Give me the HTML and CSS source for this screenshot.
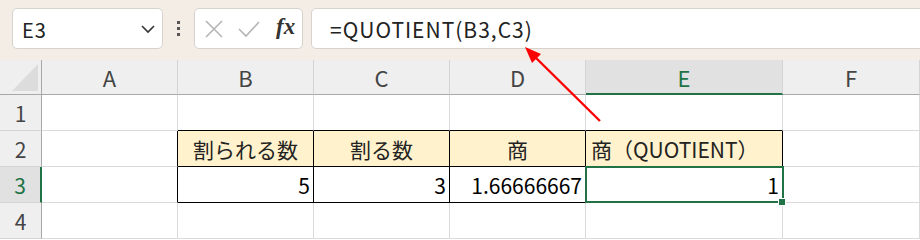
FILE: index.html
```html
<!DOCTYPE html>
<html lang="ja">
<head>
    <meta charset="UTF-8">
    <title>QUOTIENT</title>
    <link rel="stylesheet" href="styles.css">
</head>
<body>
<div class="sheet">
    <!-- 数式バー -->
    <div class="topbar">
        <div class="namebox">
            <span>E3</span>
            <svg class="chevron" width="16" height="10" viewBox="0 0 16 10">
                <path d="M2 2 L8 8 L14 2" fill="none" stroke="#333" stroke-width="1.6"/>
            </svg>
        </div>
        <div class="dots"><i></i><i></i><i></i></div>
        <div class="fxbox">
            <svg width="20" height="20" viewBox="0 0 20 20">
                <path d="M2 2 L18 18 M18 2 L2 18" stroke="#b4b4b4" stroke-width="1.6" fill="none"/>
            </svg>
            <svg width="24" height="20" viewBox="0 0 24 20">
                <path d="M2 10 L9 17 L22 3" stroke="#b4b4b4" stroke-width="1.6" fill="none"/>
            </svg>
            <span class="fx">fx</span>
        </div>
        <div class="formula">=QUOTIENT(B3,C3)</div>
    </div>

    <!-- グリッド -->
    <div class="grid">
        <div class="corner"><div class="tri"></div></div>
        <div class="colhead">A</div>
        <div class="colhead">B</div>
        <div class="colhead">C</div>
        <div class="colhead">D</div>
        <div class="colhead active">E</div>
        <div class="colhead">F</div>

        <div class="rowhead">1</div>
        <div class="cell"></div>
        <div class="cell tt"></div>
        <div class="cell tt"></div>
        <div class="cell tt"></div>
        <div class="cell tt"></div>
        <div class="cell"></div>

        <div class="rowhead">2</div>
        <div class="cell tl"></div>
        <div class="cell t head">割られる数</div>
        <div class="cell t head">割る数</div>
        <div class="cell t head">商</div>
        <div class="cell t head left">商（QUOTIENT）</div>
        <div class="cell"></div>

        <div class="rowhead active">3</div>
        <div class="cell tl"></div>
        <div class="cell t num">5</div>
        <div class="cell t num">3</div>
        <div class="cell t num">1.66666667</div>
        <div class="cell t num selected">1</div>
        <div class="cell"></div>

        <div class="rowhead">4</div>
        <div class="cell"></div>
        <div class="cell"></div>
        <div class="cell"></div>
        <div class="cell"></div>
        <div class="cell"></div>
        <div class="cell"></div>
    </div>

    <!-- 矢印 -->
    <svg class="arrow" width="920" height="240" viewBox="0 0 920 240">
        <line x1="600" y1="121" x2="532" y2="54" stroke="#ff0000" stroke-width="2.4"/>
        <polygon points="525,47 541,54 532,63" fill="#ff0000"/>
    </svg>
</div>
</body>
</html>
```

FILE: styles.css
```css
* {
    margin: 0;
    padding: 0;
    box-sizing: border-box;
}

body {
    width: 920px;
    height: 240px;
    overflow: hidden;
    background: #fff;
    font-family: "Noto Sans CJK JP", "Noto Sans", sans-serif;
    color: #000;
}

.sheet {
    position: relative;
    width: 920px;
}

.topbar {
    height: 60px;
    background: #f3ede6;
    display: flex;
    align-items: center;
    padding: 0 0 3px 12px;
}

.namebox {
    width: 151px;
    height: 41px;
    background: #fff;
    border: 1px solid #d6d2ce;
    border-radius: 5px;
    display: flex;
    align-items: center;
    justify-content: space-between;
    padding: 0 6px 0 9px;
    font-size: 20px;
    color: #222;
    letter-spacing: 1px;
}

.namebox span {
    padding-top: 2px;
}

.dots {
    width: 31px;
    display: flex;
    flex-direction: column;
    align-items: center;
    gap: 3px;
}

.dots i {
    width: 3px;
    height: 3px;
    background: #555;
}

.fxbox {
    width: 109px;
    height: 41px;
    background: #fff;
    border: 1px solid #d6d2ce;
    border-radius: 5px;
    display: flex;
    align-items: center;
    gap: 13px;
    padding-left: 9px;
}

.fx {
    font-family: "Liberation Serif", serif;
    font-style: italic;
    font-weight: bold;
    font-size: 23px;
    color: #333;
    margin-left: 2px;
    padding-bottom: 3px;
}

.formula {
    flex: 1;
    height: 41px;
    margin-left: 8px;
    margin-right: -10px;
    background: #fff;
    border: 1px solid #d6d2ce;
    border-radius: 5px;
    display: flex;
    align-items: center;
    padding: 0 0 0 18px;
    font-size: 21px;
    letter-spacing: 1px;
    color: #222;
}

.grid {
    display: grid;
    grid-template-columns: 42px 136px 136px 136px 136px 197px 1fr;
    grid-template-rows: 35px 36px 36px 36px 36px;
    font-size: 21px;
}

.corner {
    background: #efefef;
    border-right: 1px solid #a8a8a8;
    border-bottom: 1px solid #a8a8a8;
    padding: 4px 3px 3px 12px;
}

.tri {
    width: 100%;
    height: 100%;
    background: #dcdcdc;
    clip-path: polygon(100% 0, 100% 100%, 0 100%);
}

.colhead {
    background: #efefef;
    border-right: 1px solid #d4d4d4;
    border-bottom: 1px solid #a8a8a8;
    display: flex;
    align-items: center;
    justify-content: center;
    color: #444;
    font-size: 22px;
}

.colhead.active {
    background: #e1e1e1;
    border-bottom: 2px solid #217346;
    color: #217346;
}

.rowhead {
    background: #efefef;
    border-right: 1px solid #a8a8a8;
    border-bottom: 1px solid #d4d4d4;
    display: flex;
    align-items: center;
    justify-content: center;
    color: #444;
}

.rowhead.active {
    background: #e1e1e1;
    border-right: 2px solid #217346;
    color: #217346;
}

.cell {
    border-right: 1px solid #dadada;
    border-bottom: 1px solid #dadada;
    display: flex;
    align-items: center;
    padding: 0 4px;
    white-space: nowrap;
}

.cell.tt {
    border-bottom-color: #000;
}

.cell.tl {
    border-right-color: #000;
}

.cell.t {
    border-right-color: #000;
    border-bottom-color: #000;
}

.cell.head {
    background: #fff2cc;
    justify-content: center;
    color: #222;
}

.cell.left {
    justify-content: flex-start;
    padding-left: 5px;
}

.cell.num {
    justify-content: flex-end;
    padding-right: 3px;
}

.cell.selected {
    position: relative;
}

.cell.selected::before {
    content: "";
    position: absolute;
    left: -1px;
    top: -1px;
    right: -2px;
    bottom: -1px;
    border: 2px solid #217346;
}

.cell.selected::after {
    content: "";
    position: absolute;
    right: -4px;
    bottom: -4px;
    width: 6px;
    height: 6px;
    background: #217346;
    border: 1px solid #fff;
    box-sizing: content-box;
}

.arrow {
    position: absolute;
    left: 0;
    top: 0;
    pointer-events: none;
}
```
